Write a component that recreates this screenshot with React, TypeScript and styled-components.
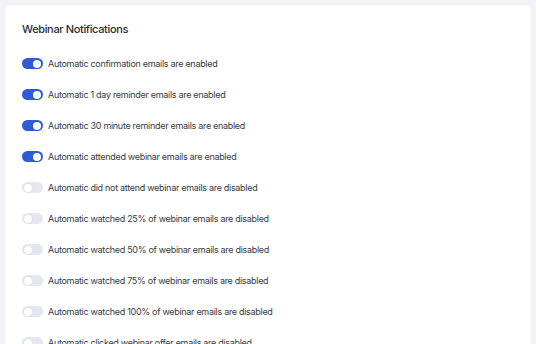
import React from "react";
import styled, { createGlobalStyle } from "styled-components";

const GlobalStyle = createGlobalStyle`
  html, body {
    margin: 0;
    padding: 0;
    background: #f3f4f8;
    font-family: Inter, "Liberation Sans", sans-serif;
  }
`;

const Page = styled.div`
  padding: 5px 5px 0 5px;
  height: 344px;
  box-sizing: border-box;
  overflow: hidden;
`;

const Card = styled.div`
  background: #ffffff;
  border-radius: 5px;
  box-shadow: 0 0 3px rgba(20, 30, 60, 0.06);
  padding: 16px 17px 20px;
  min-height: 400px;
`;

const Title = styled.h2`
  margin: 0 0 11px;
  font-size: 11px;
  line-height: 16px;
  letter-spacing: -0.35px;
  font-weight: 500;
  color: #2a2d34;
`;

const List = styled.div`
  display: flex;
  flex-direction: column;
`;

const Row = styled.label`
  display: flex;
  align-items: center;
  gap: 5px;
  height: 31px;
  font-size: 9px;
  letter-spacing: -0.3px;
  color: #383b42;
`;

const Track = styled.span<{ $on: boolean }>`
  position: relative;
  width: 21px;
  height: 11px;
  border-radius: 6px;
  background: ${(p) => (p.$on ? "#2f5bd6" : "#e4e7ef")};
  flex-shrink: 0;
`;

const Knob = styled.span<{ $on: boolean }>`
  position: absolute;
  top: 1.5px;
  left: ${(p) => (p.$on ? "11px" : "1.5px")};
  width: 8px;
  height: 8px;
  border-radius: 50%;
  background: #ffffff;
  box-shadow: 0 0 1px rgba(0, 0, 0, 0.15);
`;

const items: { text: string; on: boolean }[] = [
  { text: "Automatic confirmation emails are enabled", on: true },
  { text: "Automatic 1 day reminder emails are enabled", on: true },
  { text: "Automatic 30 minute reminder emails are enabled", on: true },
  { text: "Automatic attended webinar emails are enabled", on: true },
  { text: "Automatic did not attend webinar emails are disabled", on: false },
  { text: "Automatic watched 25% of webinar emails are disabled", on: false },
  { text: "Automatic watched 50% of webinar emails are disabled", on: false },
  { text: "Automatic watched 75% of webinar emails are disabled", on: false },
  { text: "Automatic watched 100% of webinar emails are disabled", on: false },
  { text: "Automatic clicked webinar offer emails are disabled", on: false },
];

const App = () => {
  return (
    <>
      <GlobalStyle />
      <Page>
        <Card>
          <Title>Webinar Notifications</Title>
          <List>
            {items.map((item, i) => (
              <Row key={i}>
                <Track $on={item.on}>
                  <Knob $on={item.on} />
                </Track>
                {item.text}
              </Row>
            ))}
          </List>
        </Card>
      </Page>
    </>
  );
};

export default App;
